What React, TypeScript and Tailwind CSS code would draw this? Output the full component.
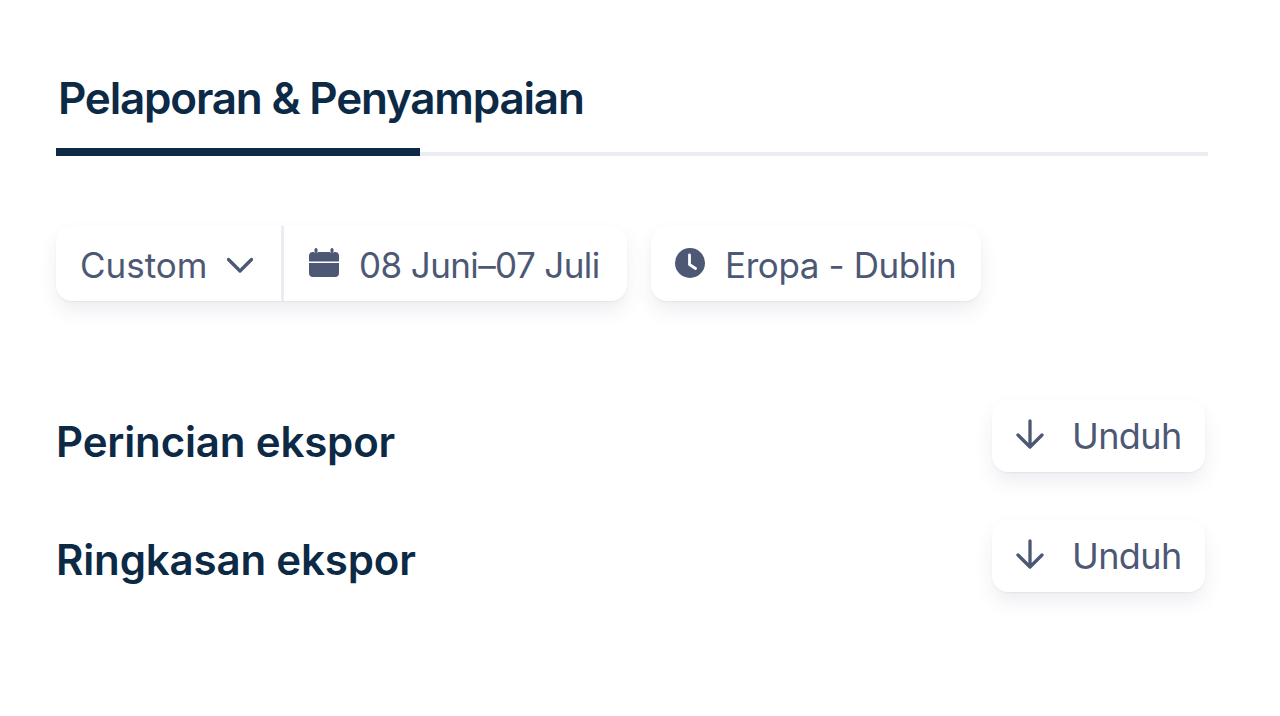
function Arrow() {
  return (
    <svg className="-mt-[4px]" width="32" height="32" viewBox="0 0 32 32" fill="none" stroke="#4d5875" strokeWidth="3.300" strokeLinecap="round" strokeLinejoin="round">
      <path d="M16 3v26M4 17l12 12 12-12" />
    </svg>
  );
}

function Row({ title, top, titleTop }: { title: string; top: string; titleTop: string }) {
  return (
    <div className={`flex justify-between items-start mr-[3px] ${top}`}>
      <h2 className={`text-[42px] leading-[52px] font-semibold tracking-[-0.15px] text-[#0c2945] ${titleTop}`}>{title}</h2>
      <button className="flex items-center h-[72px] w-[213px] pl-[22px] bg-white rounded-[16px] shadow-[0_1px_2px_rgba(60,70,110,0.06),0_10px_20px_-2px_rgba(60,70,110,0.11)] text-[36px] tracking-[-0.6px] text-[#4d5875]">
        <Arrow />
        <span className="ml-[26px]">Unduh</span>
      </button>
    </div>
  );
}

export default function App() {
  return (
    <div className="w-[1280px] h-[716px] bg-white pl-[56px] pr-[72px] pt-[68px] font-['Inter',sans-serif] overflow-hidden">
      <h1 className="text-[44px] leading-[60px] font-semibold tracking-[-1.2px] text-[#0c2945] ml-[2px]">Pelaporan &amp; Penyampaian</h1>
      <div className="mt-[20px] h-[8px] flex items-end relative">
        <div className="w-full h-[4px] bg-[#e9edf3]" />
        <div className="absolute left-0 top-0 w-[364px] h-[8px] bg-[#0c2945]" />
      </div>
      <div className="flex gap-[24px] mt-[70px] text-[35px] text-[#4d5875]">
        <div className="flex h-[75px] w-[571px] bg-white rounded-[16px] shadow-[0_1px_2px_rgba(60,70,110,0.06),0_10px_20px_-2px_rgba(60,70,110,0.11)]">
          <div className="flex items-center shrink-0 w-[228px] pl-[24px] pt-[4px] border-r-[3px] border-[#e9edf3]">
            <span>Custom</span>
            <svg className="ml-[18px] -mt-[2px]" width="28" height="18" viewBox="0 0 28 18" fill="none" stroke="#4d5875" strokeWidth="3.300" strokeLinecap="round" strokeLinejoin="round">
              <path d="M2.500 3.500L14 15 25.500 3.500" />
            </svg>
          </div>
          <div className="flex items-center pl-[25px] pt-[4px]">
            <svg className="-mt-[5px]" width="30" height="30" viewBox="0 0 30 30" fill="#4d5875">
              <path d="M0 15h30v10a4 4 0 0 1-4 4H4a4 4 0 0 1-4-4V15z" />
              <path d="M4 4h.700a3.500 3.500 0 0 0 4.600 0h11.400a3.500 3.500 0 0 0 4.600 0H26a4 4 0 0 1 4 4v5.500H0V8a4 4 0 0 1 4-4z" />
              <rect x="5.500" y="0" width="3" height="5" rx="1.500" />
              <rect x="21.500" y="0" width="3" height="5" rx="1.500" />
            </svg>
            <span className="ml-[20px] whitespace-nowrap tracking-[-0.6px]">08 Juni–07 Juli</span>
          </div>
        </div>
        <div className="flex items-center h-[75px] w-[330px] pl-[24px] pt-[4px] bg-white rounded-[16px] shadow-[0_1px_2px_rgba(60,70,110,0.06),0_10px_20px_-2px_rgba(60,70,110,0.11)]">
          <svg className="-mt-[6px]" width="30" height="30" viewBox="0 0 30 30">
            <circle cx="15" cy="15" r="15" fill="#4d5875" />
            <path d="M14.500 7v9.500l6 4" fill="none" stroke="#fff" strokeWidth="2.800" strokeLinecap="round" strokeLinejoin="round" />
          </svg>
          <span className="ml-[20px] whitespace-nowrap tracking-[-0.4px]">Eropa - Dublin</span>
        </div>
      </div>
      <Row title="Perincian ekspor" top="mt-[99px]" titleTop="mt-[16px]" />
      <Row title="Ringkasan ekspor" top="mt-[48px]" titleTop="mt-[14px]" />
    </div>
  );
}
